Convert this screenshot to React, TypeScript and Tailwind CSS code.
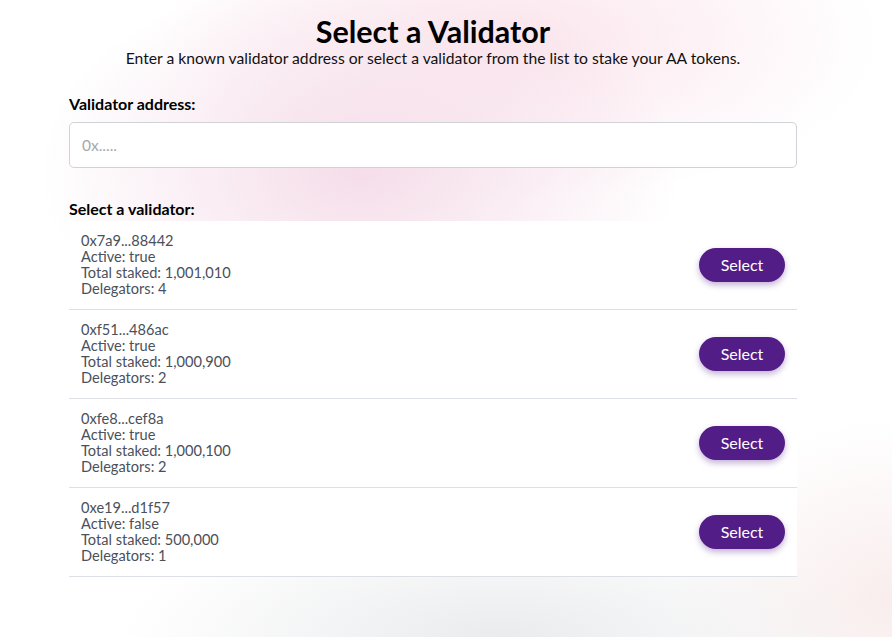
const validators = [
  { address: '0x7a9...88442', active: 'true', staked: '1,001,010', delegators: 4 },
  { address: '0xf51...486ac', active: 'true', staked: '1,000,900', delegators: 2 },
  { address: '0xfe8...cef8a', active: 'true', staked: '1,000,100', delegators: 2 },
  { address: '0xe19...d1f57', active: 'false', staked: '500,000', delegators: 1 },
];

export default function App() {
  return (
    <div className="min-h-[637px] w-full bg-white bg-[radial-gradient(ellipse_320px_200px_at_360px_170px,#f5dde9_0%,rgba(245,221,233,0)_100%),radial-gradient(ellipse_360px_160px_at_520px_40px,#fbe6ed_0%,rgba(251,230,237,0)_100%),radial-gradient(ellipse_380px_130px_at_500px_640px,#eaebed_0%,rgba(234,235,237,0)_100%),radial-gradient(ellipse_220px_180px_at_892px_600px,#f9eded_0%,rgba(249,237,237,0)_100%)] font-['Lato',sans-serif]">
      <div className="ml-[69px] w-[728px] pt-[13px]">
        <h1 className="text-center text-[30.5px] font-bold leading-[36px] text-black">Select a Validator</h1>
        <p className="text-center text-[15.7px] leading-[18px] text-[#111]">
          Enter a known validator address or select a validator from the list to stake your AA tokens.
        </p>

        <label className="mt-[28px] block text-[16px] font-bold leading-[18px] text-black">Validator address:</label>
        <input
          placeholder="0x....."
          className="mt-[9px] h-[46px] w-full rounded-[5px] border border-[#cfd3d8] bg-white px-[12px] text-[15.5px] text-gray-700 placeholder:text-[#a4a8ae] outline-none"
        />

        <p className="mt-[32px] text-[16px] font-bold leading-[18px] text-black">Select a validator:</p>
        <ul className="mt-[3px] bg-white">
          {validators.map((v) => (
            <li key={v.address} className="flex h-[89px] items-center justify-between border-b border-[#dcdfe4] px-[12px]">
              <div className="text-[14.6px] leading-[16px] text-[#4b505a]">
                <div>{v.address}</div>
                <div>Active: {v.active}</div>
                <div>Total staked: {v.staked}</div>
                <div>Delegators: {v.delegators}</div>
              </div>
              <button className="h-[34px] w-[86px] rounded-full bg-[#521d86] text-[16px] text-white shadow-[0_3px_6px_rgba(82,29,134,0.35)]">
                Select
              </button>
            </li>
          ))}
        </ul>
      </div>
    </div>
  );
}
